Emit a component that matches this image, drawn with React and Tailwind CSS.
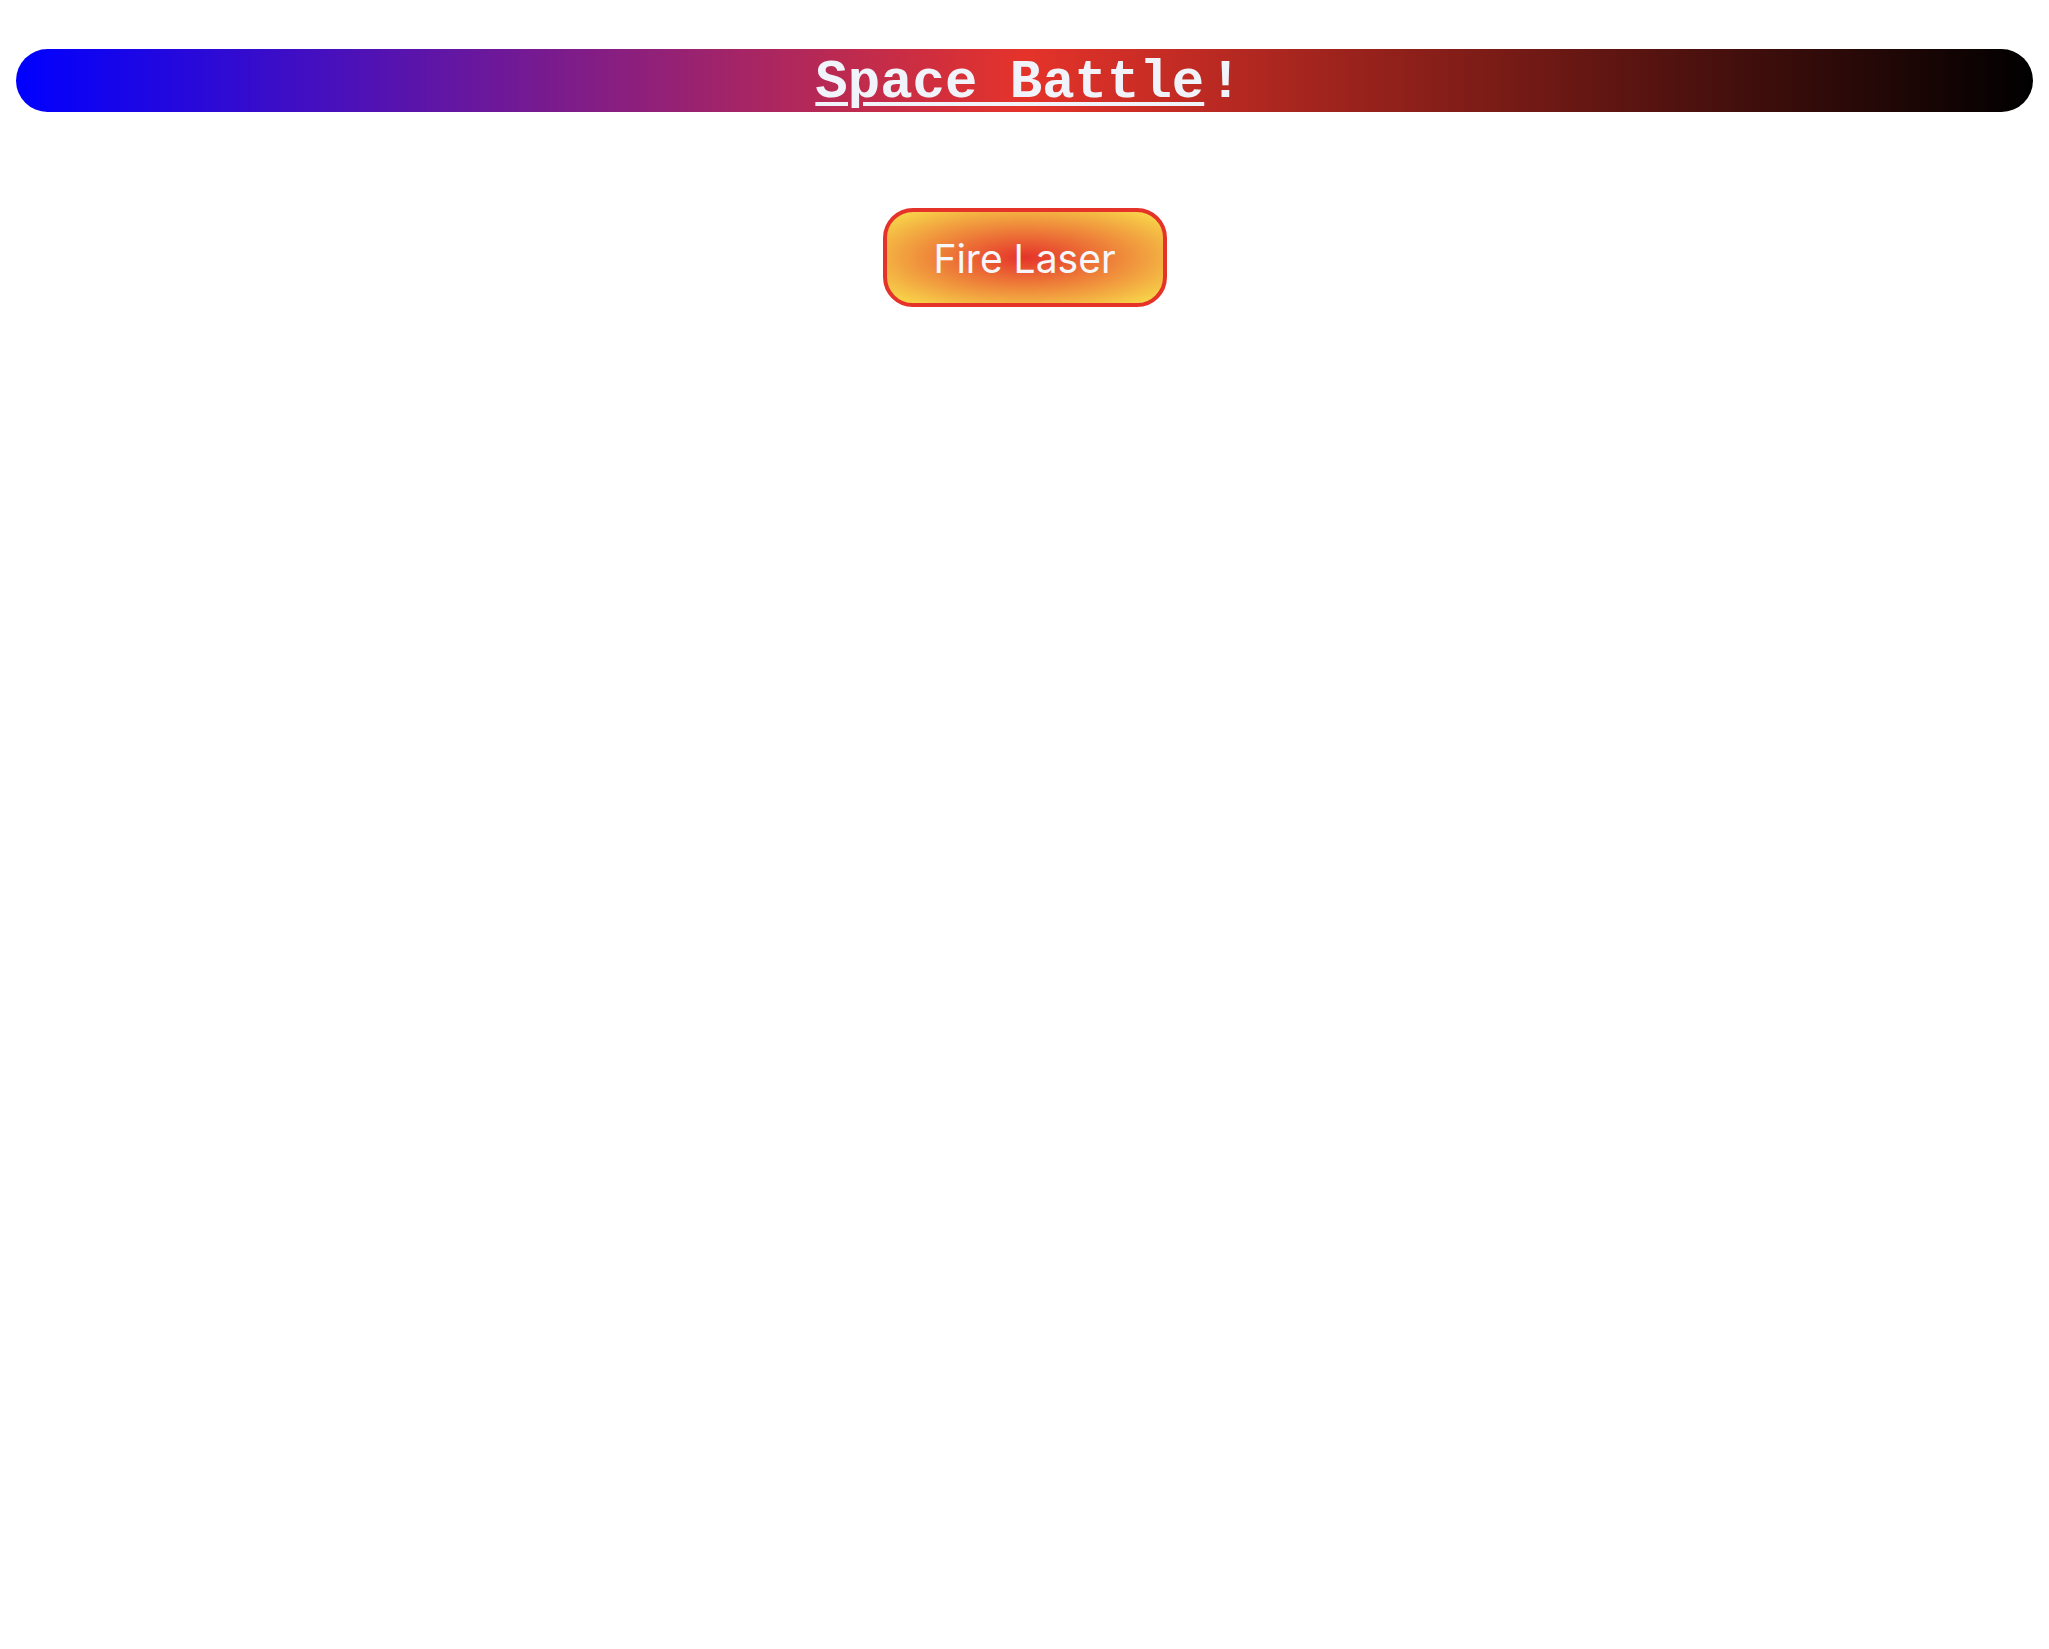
export default function App() {
  return (
    <div className="min-h-screen bg-white pt-[49px]">
      {/* Title bar */}
      <div className="mx-4 flex h-[63px] items-center justify-center rounded-full bg-[linear-gradient(to_right,#0000ff,#e5332a,#000000)]">
        <h1
          className="ml-[8px] pt-[5px] text-[54px] font-bold leading-none text-[#f0f4fa]"
          style={{ fontFamily: '"Liberation Mono", "Courier New", monospace' }}
        >
          <span className="underline decoration-[4px] underline-offset-[5px]">Space Battle</span>
          <span className="ml-[5px]">!</span>
        </h1>
      </div>

      {/* Action */}
      <div className="mt-[96px] flex justify-center">
        <button
          className="h-[99px] w-[284px] rounded-[30px] border-4 border-[#e5332a] bg-[radial-gradient(#e5332a,#f9e24c)] pt-[3px] text-[39px] text-[#f5f7fb]"
          style={{ fontFamily: 'Inter, "Noto Sans", sans-serif' }}
        >
          Fire Laser
        </button>
      </div>
    </div>
  );
}
